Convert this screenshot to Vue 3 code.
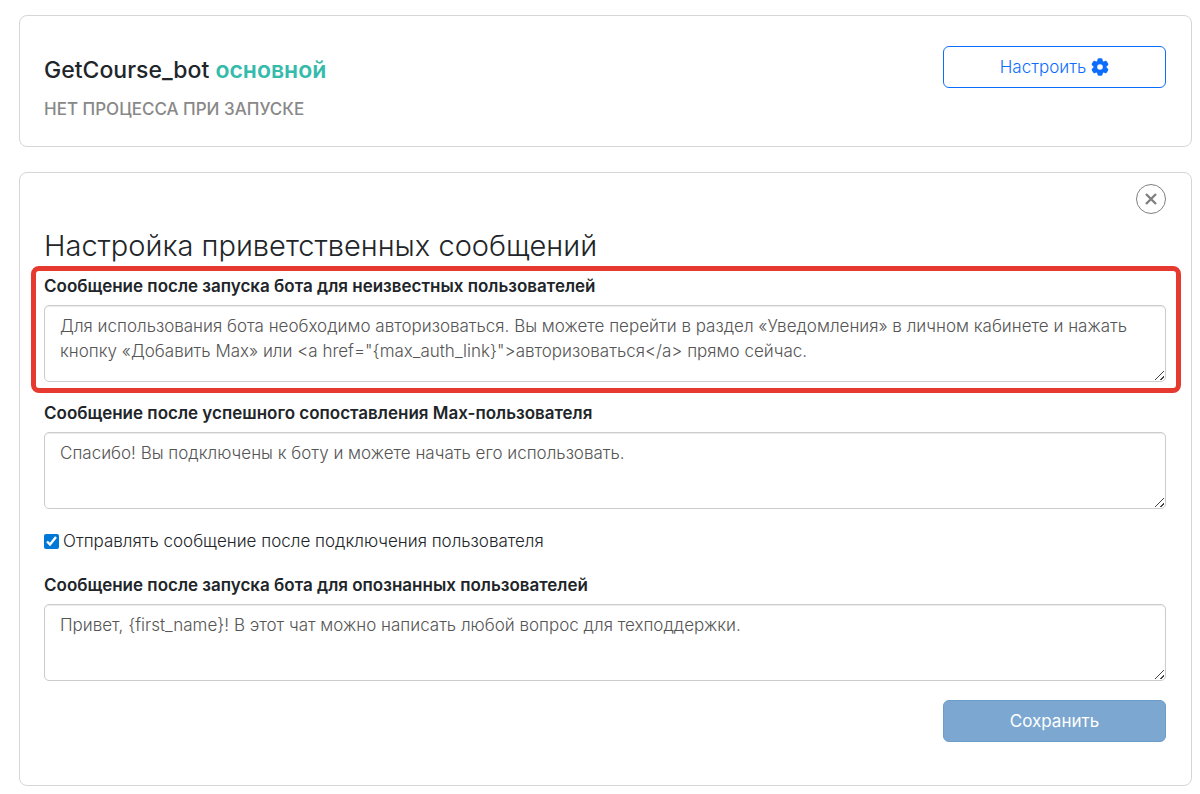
<script setup>
import { ref } from 'vue'

const unknownText = ref('Для использования бота необходимо авторизоваться. Вы можете перейти в раздел «Уведомления» в личном кабинете и нажать кнопку «Добавить Max» или <a href="{max_auth_link}">авторизоваться</a> прямо сейчас.')
const matchedText = ref('Спасибо! Вы подключены к боту и можете начать его использовать.')
const knownText = ref('Привет, {first_name}! В этот чат можно написать любой вопрос для техподдержки.')
const sendAfterConnect = ref(true)
</script>

<template>
  <main class="page">
    <section class="panel bot">
      <div>
        <h2 class="bot-name">GetCourse_bot <span class="primary">основной</span></h2>
        <p class="bot-status">НЕТ ПРОЦЕССА ПРИ ЗАПУСКЕ</p>
      </div>
      <button type="button" class="btn btn-outline">
        Настроить
        <svg class="gear" viewBox="0 0 18 18" aria-hidden="true">
          <g fill="currentColor">
            <rect x="6.3" y="0.3" width="5.4" height="17.4" rx="1.6" />
            <rect x="6.3" y="0.3" width="5.4" height="17.4" rx="1.6" transform="rotate(60 9 9)" />
            <rect x="6.3" y="0.3" width="5.4" height="17.4" rx="1.6" transform="rotate(120 9 9)" />
            <circle cx="9" cy="9" r="6.6" />
          </g>
          <circle cx="9" cy="9" r="2.8" fill="#fff" />
        </svg>
      </button>
    </section>

    <section class="panel settings">
      <button type="button" class="close" aria-label="Закрыть">
        <svg viewBox="0 0 12 12" aria-hidden="true">
          <path d="M1 1 11 11M11 1 1 11" stroke="currentColor" stroke-width="2.4" />
        </svg>
      </button>
      <h1 class="title">Настройка приветственных сообщений</h1>
      <form class="form" @submit.prevent>
        <div class="field highlighted">
          <label for="unknown">Сообщение после запуска бота для неизвестных пользователей</label>
          <textarea id="unknown" v-model="unknownText" spellcheck="false"></textarea>
        </div>
        <div class="field">
          <label for="matched">Сообщение после успешного сопоставления Max-пользователя</label>
          <textarea id="matched" v-model="matchedText" spellcheck="false"></textarea>
        </div>
        <label class="check">
          <input v-model="sendAfterConnect" type="checkbox" />
          <span>Отправлять сообщение после подключения пользователя</span>
        </label>
        <div class="field">
          <label for="known">Сообщение после запуска бота для опознанных пользователей</label>
          <textarea id="known" v-model="knownText" spellcheck="false"></textarea>
        </div>
        <button type="submit" class="btn btn-save">Сохранить</button>
      </form>
    </section>
  </main>
</template>

<style>
body {
  margin: 0;
  background: #fff;
}
</style>

<style scoped>
.page {
  display: flex;
  flex-direction: column;
  gap: 25px;
  padding: 15px 8px 8px 19px;
  font-family: Inter, "Open Sans", sans-serif;
  font-size: 17px;
  font-weight: 300;
  color: #212529;
}
.page * {
  box-sizing: border-box;
}
.panel {
  border: 1px solid #d6d6d6;
  border-radius: 8px;
  background: #fff;
}
.bot {
  display: flex;
  justify-content: space-between;
  align-items: flex-start;
  padding: 30px 25px 25px 24px;
}
.bot-name {
  margin: 8px 0 0;
  font-size: 23px;
  line-height: 32px;
  font-weight: 500;
}
.primary {
  font-weight: 600;
  color: #35bbab;
}
.bot-status {
  margin: 11px 0 0;
  font-size: 17px;
  line-height: 24px;
  font-weight: 500;
  color: #888;
}
.btn {
  display: flex;
  align-items: center;
  justify-content: center;
  gap: 5px;
  width: 223px;
  height: 42px;
  padding: 0;
  border-radius: 6px;
  font: inherit;
  cursor: pointer;
}
.btn-outline {
  border: 1px solid #0d6efd;
  background: #fff;
  color: #0d6efd;
}
.gear {
  width: 18px;
  height: 18px;
}
.settings {
  display: flex;
  flex-direction: column;
  padding: 11px 25px 43px 24px;
}
.close {
  display: flex;
  align-items: center;
  justify-content: center;
  align-self: flex-end;
  width: 30px;
  height: 30px;
  padding: 0;
  border: 1px solid #808080;
  border-radius: 50%;
  background: #fff;
  color: #808080;
  cursor: pointer;
}
.close svg {
  width: 12px;
  height: 12px;
}
.title {
  margin: 12px 0 8px;
  font-size: 29px;
  line-height: 40px;
  font-weight: 300;
}
.form {
  display: flex;
  flex-direction: column;
  gap: 19px;
}
.field {
  display: flex;
  flex-direction: column;
  gap: 7px;
  position: relative;
}
.field label {
  line-height: 24px;
  font-weight: 600;
}
.highlighted::after {
  content: "";
  position: absolute;
  inset: -8px -15px -11px -13px;
  border: 5px solid #e63a30;
  border-radius: 8px;
  pointer-events: none;
}
.field textarea {
  display: block;
  width: 100%;
  height: 77px;
  padding: 8px 15px;
  border: 1px solid #ccc;
  border-radius: 5px;
  box-shadow: inset 0 1px 1px rgba(0, 0, 0, 0.08);
  background: #fff;
  font: inherit;
  line-height: 25px;
  color: #555;
  resize: vertical;
}
.field textarea::-webkit-resizer {
  background: linear-gradient(135deg, transparent 45%, #444 45%, #444 55%, transparent 55%, transparent 77%, #444 77%, #444 87%, transparent 87%) 5px 5px / 9px 9px no-repeat;
}
.check {
  display: flex;
  align-items: center;
  gap: 4px;
  line-height: 26px;
}
.check input {
  width: 15px;
  height: 15px;
  margin: 0;
  accent-color: #0078d7;
}
.btn-save {
  align-self: flex-end;
  border: 1px solid #6b9dcb;
  background: #7ba7d1;
  color: #fff;
  font-weight: 400;
}
</style>
